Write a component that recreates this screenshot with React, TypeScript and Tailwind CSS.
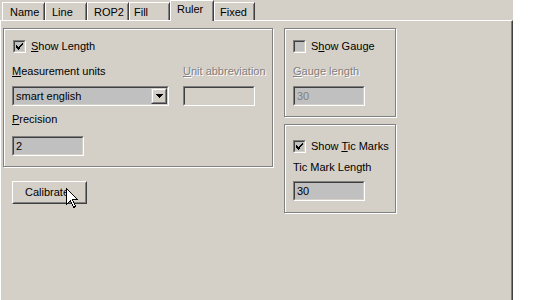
import React from "react";

const FONT = { fontFamily: '"Liberation Sans", Arial, sans-serif' };

function U({ children }: { children: React.ReactNode }) {
  return <span className="underline decoration-1 underline-offset-[1px]">{children}</span>;
}

function Sunken({ w, h, fill, children }: { w: string; h: string; fill: string; children?: React.ReactNode }) {
  return (
    <div className={`${w} ${h} border border-t-[#808080] border-l-[#808080] border-r-white border-b-white`}>
      <div className={`h-full w-full border border-t-[#404040] border-l-[#404040] border-r-[#d4d0c8] border-b-[#d4d0c8] ${fill} flex items-center`}>
        {children}
      </div>
    </div>
  );
}

function Check({ checked }: { checked: boolean }) {
  return (
    <div className="w-[13px] h-[13px] border border-t-[#808080] border-l-[#808080] border-r-white border-b-white shrink-0">
      <div className="w-full h-full border border-t-[#404040] border-l-[#404040] border-r-[#d4d0c8] border-b-[#d4d0c8] bg-[#c0c0c0] flex items-center justify-center">
        {checked && (
          <svg width="7" height="7" viewBox="0 0 7 7" shapeRendering="crispEdges">
            <path d="M0 2h1v1H0zM0 3h2v1H0zM0 4h3v1H0zM1 5h3v1H1zM2 6h1v1H2zM3 4h1v1H3zM3 3h2v1H3zM4 2h2v1H4zM5 1h2v1H5zM6 0h1v1H6zM4 3h1v1H4zM5 2h1v1H5z" fill="#000" />
          </svg>
        )}
      </div>
    </div>
  );
}

function Group({ w, h, className, children }: { w: string; h: string; className?: string; children: React.ReactNode }) {
  return (
    <div className={`${w} ${h} border border-[#808080] shadow-[1px_1px_0_#fff,inset_1px_1px_0_#fff] ${className ?? ""}`}>
      {children}
    </div>
  );
}

function Tab({ label, w, pl, selected }: { label: string; w: string; pl: string; selected?: boolean }) {
  if (selected) {
    return (
      <div className={`${w} h-[21px] -mb-[1px] relative z-10 bg-[#d4d0c8] border-l border-t border-white border-r border-r-[#404040] ${pl} pt-[2px] leading-[13px]`}>
        <div className="absolute right-0 top-[1px] bottom-0 w-px bg-[#808080]" />
        {label}
      </div>
    );
  }
  return (
    <div className={`${w} h-[18px] bg-[#d4d0c8] border-l border-t border-white border-r border-r-[#404040] ${pl} pt-[3px] leading-[13px] relative`}>
      <div className="absolute right-0 top-[1px] bottom-0 w-px bg-[#808080]" />
      {label}
    </div>
  );
}

const dis = "text-[#808080] [text-shadow:1px_1px_0_#fff]";

export default function App() {
  return (
    <div className="w-[550px] h-[300px] bg-white overflow-hidden text-[11px] text-black relative" style={FONT}>
      <div className="w-[513px] h-[300px] bg-[#d4d0c8] flex flex-col">
        {/* tabs */}
        <div className="h-[20px] flex items-end pl-[2px] shrink-0">
          <Tab label="Name" w="w-[43px]" pl="pl-[7px]" />
          <Tab label="Line" w="w-[42px]" pl="pl-[6px]" />
          <Tab label="ROP2" w="w-[42px]" pl="pl-[6px]" />
          <Tab label="Fill" w="w-[41px]" pl="pl-[4px]" />
          <Tab label="Ruler" w="w-[44px]" pl="pl-[6px]" selected />
          <Tab label="Fixed" w="w-[41px]" pl="pl-[5px]" />
        </div>
        {/* panel */}
        <div className="flex-1 border-t border-l border-white border-r border-r-[#404040] shadow-[inset_-1px_0_0_#808080] flex pt-[7px] pl-[2px]">
          {/* left column */}
          <div className="flex flex-col">
            <Group w="w-[270px]" h="h-[139px]">
              <div className="pl-[8px] pt-[11px] flex flex-col">
                <div className="flex items-center h-[13px] pl-[1px]">
                  <Check checked />
                  <span className="ml-[5px] leading-[13px]"><U>S</U>how Length</span>
                </div>
                <div className="flex mt-[12px] leading-[13px]">
                  <div className="w-[157px]"><U>M</U>easurement units</div>
                  <div className={`ml-[14px] ${dis}`}><U>U</U>nit abbreviation</div>
                </div>
                <div className="flex mt-[8px]">
                  <div className="w-[157px] h-[20px] border border-t-[#808080] border-l-[#808080] border-r-white border-b-white">
                    <div className="h-full w-full border border-t-[#404040] border-l-[#404040] border-r-[#d4d0c8] border-b-[#d4d0c8] bg-[#c0c0c0] flex items-center">
                      <span className="flex-1 pl-[2px] leading-[13px]">smart english</span>
                      <div className="w-[16px] h-[16px] border border-t-[#d4d0c8] border-l-[#d4d0c8] border-r-[#404040] border-b-[#404040] shrink-0">
                        <div className="w-full h-full border border-t-white border-l-white border-r-[#808080] border-b-[#808080] bg-[#d4d0c8] flex items-center justify-center">
                          <svg width="7" height="4" viewBox="0 0 7 4" shapeRendering="crispEdges">
                            <path d="M0 0h7v1H0zM1 1h5v1H1zM2 2h3v1H2zM3 3h1v1H3z" fill="#000" />
                          </svg>
                        </div>
                      </div>
                    </div>
                  </div>
                  <div className="ml-[14px]">
                    <Sunken w="w-[72px]" h="h-[20px]" fill="bg-[#d4d0c8]" />
                  </div>
                </div>
                <div className="mt-[7px] leading-[13px]"><U>P</U>recision</div>
                <div className="mt-[10px]">
                  <Sunken w="w-[72px]" h="h-[20px]" fill="bg-[#c0c0c0]">
                    <span className="pl-[2px] leading-[13px]">2</span>
                  </Sunken>
                </div>
              </div>
            </Group>
            <div className="relative ml-[9px] mt-[14px] w-[75px] h-[23px] border border-t-white border-l-white border-r-[#404040] border-b-[#404040]">
              <div className="w-full h-full border border-t-[#d4d0c8] border-l-[#d4d0c8] border-r-[#808080] border-b-[#808080] flex items-center pl-[11px] leading-[13px]">
                Calibrate
              </div>
              <svg className="absolute left-[53px] top-[6px]" width="12" height="21" viewBox="0 0 12 21" shapeRendering="crispEdges">
                <path d="M0.5 0.5 L0.5 16.5 L4.5 12.5 L7.5 19.5 L9.5 18.5 L6.5 11.5 L11.5 11.5 Z" fill="#fff" stroke="#000" strokeWidth="1" />
              </svg>
            </div>
          </div>
          {/* right column */}
          <div className="flex flex-col ml-[11px]">
            <Group w="w-[112px]" h="h-[89px]">
              <div className="pl-[8px] pt-[11px] flex flex-col">
                <div className="flex items-center h-[13px]">
                  <Check checked={false} />
                  <span className="ml-[5px] leading-[13px]">S<U>h</U>ow Gauge</span>
                </div>
                <div className={`mt-[12px] leading-[13px] ${dis}`}><U>G</U>auge length</div>
                <div className="mt-[8px]">
                  <Sunken w="w-[72px]" h="h-[20px]" fill="bg-[#c0c0c0]">
                    <span className="pl-[2px] leading-[13px] text-[#808080]">30</span>
                  </Sunken>
                </div>
              </div>
            </Group>
            <Group w="w-[112px]" h="h-[89px]" className="mt-[7px]">
              <div className="pl-[8px] pt-[15px] flex flex-col">
                <div className="flex items-center h-[13px]">
                  <Check checked />
                  <span className="ml-[5px] leading-[13px]">Show <U>T</U>ic Marks</span>
                </div>
                <div className="mt-[8px] leading-[13px]">Tic Mark Length</div>
                <div className="mt-[7px]">
                  <Sunken w="w-[72px]" h="h-[20px]" fill="bg-[#c0c0c0]">
                    <span className="pl-[2px] leading-[13px]">30</span>
                  </Sunken>
                </div>
              </div>
            </Group>
          </div>
        </div>
      </div>
    </div>
  );
}
